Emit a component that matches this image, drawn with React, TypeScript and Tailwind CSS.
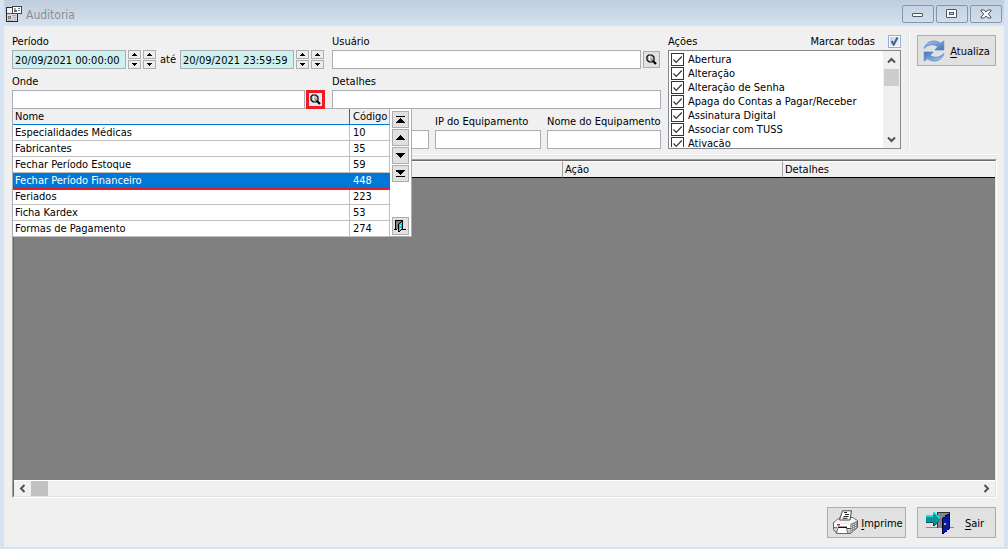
import React, { useState } from "react";

type Place = { name: string; code: string };

const PLACES: Place[] = [
  { name: "Especialidades Médicas", code: "10" },
  { name: "Fabricantes", code: "35" },
  { name: "Fechar Período Estoque", code: "59" },
  { name: "Fechar Período Financeiro", code: "448" },
  { name: "Feriados", code: "223" },
  { name: "Ficha Kardex", code: "53" },
  { name: "Formas de Pagamento", code: "274" },
];

const ACTIONS = [
  "Abertura",
  "Alteração",
  "Alteração de Senha",
  "Apaga do Contas a Pagar/Receber",
  "Assinatura Digital",
  "Associar com TUSS",
  "Ativação",
];

const FIELD =
  "h-[19px] min-w-0 border border-[#abadb3] bg-white px-[2px] outline-none";
const BUTTON = "border border-[#adadad] bg-[#e1e1e1]";

function Label({ htmlFor, children }: { htmlFor: string; children: React.ReactNode }) {
  return (
    <label htmlFor={htmlFor} className="block h-[21px] pt-1 leading-[17px] whitespace-nowrap">
      {children}
    </label>
  );
}

function Magnifier() {
  return (
    <svg viewBox="0 0 11 11" className="h-[11px] w-[11px]" fill="none">
      <path d="M2.500 1h3.500l2 2v3L6 8H3L1 6V2.500z" fill="#c4c4c4" stroke="#000" strokeWidth="1.200" />
      <path d="M3.500 2v4" stroke="#fff" strokeWidth="1.200" />
      <path d="M5.500 4.500v2" stroke="#8a8a8a" strokeWidth="1.200" />
      <path d="M7.200 7.200l2.800 2.800" stroke="#000" strokeWidth="2.200" />
    </svg>
  );
}

function Spinner({ label }: { label: string }) {
  return (
    <div className="flex flex-col gap-px">
      <button
        aria-label={`${label} mais`}
        className="flex h-[9px] w-[13px] items-center justify-center border border-[#adadad] bg-[#ececec]"
      >
        <svg viewBox="0 0 5 3" className="h-[3px] w-[5px]" shapeRendering="crispEdges">
          <path d="M2 0h1v1h1v1h1v1H0V2h1V1h1z" />
        </svg>
      </button>
      <button
        aria-label={`${label} menos`}
        className="flex h-[9px] w-[13px] items-center justify-center border border-[#adadad] bg-[#ececec]"
      >
        <svg viewBox="0 0 5 3" className="h-[3px] w-[5px]" shapeRendering="crispEdges">
          <path d="M0 0h5v1H4v1H3v1H2V2H1V1H0z" />
        </svg>
      </button>
    </div>
  );
}

function DateField({ id, value, label }: { id: string; value: string; label: string }) {
  return (
    <div className="flex gap-[2px]">
      <input
        id={id}
        aria-label={label}
        defaultValue={value}
        className="h-[19px] w-[114px] border border-[#abadb3] bg-[#cef0ee] px-[2px] pt-px outline-none"
      />
      <Spinner label={`${label}, data,`} />
      <Spinner label={`${label}, hora,`} />
    </div>
  );
}

function NavButton({ label, path }: { label: string; path: string }) {
  return (
    <button aria-label={label} className={`${BUTTON} flex h-[17px] w-[17px] items-center justify-center`}>
      <svg viewBox="0 0 9 7" className="h-[7px] w-[9px]" shapeRendering="crispEdges">
        <path d={path} />
      </svg>
    </button>
  );
}

function ExitGlyph() {
  return (
    <svg viewBox="0 0 13 12" className="h-[12px] w-[13px]" shapeRendering="crispEdges">
      <path d="M2 0h6v9H2z" fill="#808080" />
      <path d="M1 0h8v1H2v9H1zM0 9h3v1H0zM9 9h3v1H9zM8 1h1v9H8z" fill="#000" />
      <path d="M4 4l4-3v8l-4 3z" fill="#00d8d8" />
      <path d="M4 4l4-3v1L5 4.500V11l3-2v1l-3 2H4z" fill="#000" />
      <path d="M6 5h1v1H6zM6 8h1v1H6z" fill="#fff" />
    </svg>
  );
}

function PlacePicker() {
  const [selected, setSelected] = useState("448");
  return (
    <div className="absolute top-[18px] left-0 z-10 flex w-[400px] border-x border-t border-[#abadb3] bg-white">
      <table className="w-[377px] table-fixed border-separate border-spacing-0">
        <colgroup>
          <col />
          <col className="w-[40px]" />
        </colgroup>
        <thead>
          <tr>
            <th className="h-4 border-r border-b border-r-[#0078d7] border-b-[#0078d7] bg-[#f0f0f0] p-0 pt-px pl-[2px] text-left leading-[14px] font-normal">
              Nome
            </th>
            <th className="h-4 border-r border-b border-r-[#abadb3] border-b-[#0078d7] bg-[#f0f0f0] p-0 pt-px pl-[3px] text-left leading-[14px] font-normal">
              Código
            </th>
          </tr>
        </thead>
        <tbody>
          {PLACES.map((p) => {
            const cell =
              p.code === selected
                ? "relative z-10 h-4 border-b-2 border-b-[#ed1c24] bg-[#0078d7] p-0 pt-px text-left leading-[13px] text-white shadow-[0_1px_0_#ed1c24]"
                : "h-4 border-r border-b border-[#c0c0c0] p-0 pt-px text-left leading-[14px]";
            return (
              <tr key={p.code} onClick={() => setSelected(p.code)}>
                <td className={`${cell} pl-[2px]`}>{p.name}</td>
                <td className={`${cell} pl-[3px]`}>{p.code}</td>
              </tr>
            );
          })}
        </tbody>
      </table>
      <div className="flex flex-1 flex-col items-center gap-px border-b border-[#abadb3] pt-[2px] pb-px">
        <NavButton label="Primeiro" path="M0 0h9v1H0zM4 2h1v1h1v1h1v1h1v1h1v1H0V6h1V5h1V4h1V3h1z" />
        <NavButton label="Anterior" path="M4 1h1v1h1v1h1v1h1v1h1v1H0V5h1V4h1V3h1V2h1z" />
        <NavButton label="Próximo" path="M0 1h9v1H8v1H7v1H6v1H5v1H4V5H3V4H2V3H1V2H0z" />
        <NavButton label="Último" path="M0 0h9v1H8v1H7v1H6v1H5v1H4V4H3V3H2V2H0zM0 6h9v1H0z" />
        <button aria-label="Fechar lista" className={`${BUTTON} mt-auto flex h-[18px] w-[17px] items-center justify-center`}>
          <ExitGlyph />
        </button>
      </div>
    </div>
  );
}

function Chevron({ d }: { d: string }) {
  return (
    <svg viewBox="0 0 9 9" className="h-[9px] w-[9px]" fill="none" stroke="#505050" strokeWidth="2">
      <path d={d} />
    </svg>
  );
}

function ActionList() {
  return (
    <div className="flex h-[99px] overflow-hidden border border-[#828790] bg-white">
      <div className="h-[96px] flex-1 overflow-hidden pt-[2px] pl-[2px]">
        {ACTIONS.map((a) => (
          <label key={a} className="flex h-[14px] items-start gap-1 leading-[14px] whitespace-nowrap">
            <span className="relative flex h-[13px] w-[13px] shrink-0">
              <input
                type="checkbox"
                defaultChecked
                className="peer h-[13px] w-[13px] appearance-none border border-[#333] bg-white"
              />
              <svg
                viewBox="0 0 13 13"
                className="pointer-events-none absolute inset-0 hidden h-[13px] w-[13px] peer-checked:block"
                fill="none"
                stroke="#333"
                strokeWidth="1.200"
              >
                <path d="M2.500 6.500l2.700 2.800L10.800 3.500" />
              </svg>
            </span>
            {a}
          </label>
        ))}
      </div>
      <div className="flex w-[17px] flex-col items-center bg-[#f0f0f0]">
        <button aria-label="Rolar para cima" className="flex h-[18px] w-full items-center justify-center">
          <Chevron d="M1 6.500L4.500 3 8 6.500" />
        </button>
        <div className="h-[17px] w-[15px] bg-[#cdcdcd]" />
        <button aria-label="Rolar para baixo" className="mt-auto flex h-[18px] w-full items-center justify-center">
          <Chevron d="M1 2.500L4.500 6 8 2.500" />
        </button>
      </div>
    </div>
  );
}

function WindowIcon() {
  return (
    <svg viewBox="0 0 16 16" className="h-4 w-4" shapeRendering="crispEdges">
      <path d="M0 1h7v7h5v8H0z" fill="#2a2a2a" />
      <path d="M1 2h5v6h5v7H1z" fill="#d9d9d9" />
      <path d="M1 2h5v5H1z" fill="#f4f4f4" />
      <path d="M1 7h10v1H1z" fill="#555" />
      <path d="M2 10h3v1H2zM2 12h3v1H2zM2 10h1v3H2zM4 10h1v3H4z" fill="#777" />
      <path d="M6 9h4v1H6zM7 11h3v1H7zM2 14h2v1H2zM5 14h2v1H5zM8 13h2v1H8z" fill="#aaa" />
      <path d="M6 0h10v8H6z" fill="#444" />
      <path d="M7 1h8v6H7z" fill="#fff" />
      <path d="M8 2h2v2H8z" fill="#e0a050" />
      <path d="M8 4h3v2H8z" fill="#3d6fb5" />
      <path d="M12 2h2v1h-2zM12 4h2v1h-2z" fill="#6a7a90" />
    </svg>
  );
}

function RefreshIcon() {
  return (
    <svg viewBox="0 0 22 22" className="h-[22px] w-[22px]">
      <defs>
        <linearGradient id="blueUp" x1="0" y1="0" x2="1" y2="1">
          <stop offset="0" stopColor="#a9caee" />
          <stop offset="1" stopColor="#3f74b8" />
        </linearGradient>
        <linearGradient id="blueDown" x1="0" y1="0" x2="1" y2="1">
          <stop offset="0" stopColor="#3f74b8" />
          <stop offset="1" stopColor="#a9caee" />
        </linearGradient>
      </defs>
      <path
        d="M1 8.500C2.500 3.500 6.500 1 11 1c2.500 0 4.700.8 6.300 2.400L20.800 1v9h-9l3-3.200C11.500 3.800 5.500 4 1 8.500z"
        fill="url(#blueUp)"
        stroke="#5584bd"
        strokeWidth=".7"
      />
      <path
        d="M21 13.500C19.500 18.500 15.500 21 11 21c-2.500 0-4.700-.8-6.300-2.400L1.200 21v-9h9l-3 3.200c3.300 3 9.300 2.800 13.800-1.700z"
        fill="url(#blueDown)"
        stroke="#5584bd"
        strokeWidth=".7"
      />
    </svg>
  );
}

function PrinterIcon() {
  return (
    <svg viewBox="0 0 26 25" className="h-[25px] w-[26px]">
      <path d="M.5 12.500L7 7.500h12.500l5 3v7l-7 6H4l-3.500-4z" fill="#c4c4c4" stroke="#444" strokeWidth=".8" />
      <path d="M1 12.500L7 8h12.500l4.500 2.800-6.500 3.200z" fill="#f4f4f4" />
      <path d="M1 12.800L17 14v5.500H1z" fill="#fff" />
      <path d="M17.500 14l6.500-3v6.500l-6.500 5.500z" fill="#8c8c8c" />
      <path d="M18.500 15v7M20.500 14v6.500M22.500 13v6" stroke="#d8d8d8" strokeWidth="1" strokeDasharray="1 1" />
      <path d="M1 17.800h3M14 18.500h3.500" stroke="#333" strokeWidth="1" />
      <path d="M9.500.8h9L17 10H6.500z" fill="#fff" stroke="#333" strokeWidth=".9" />
      <path d="M11 2.500h3M12 4.500h4M10.500 6.500h5M9.500 8.300h5" stroke="#222" strokeWidth="1" />
      <path d="M5 17.500h8l2 6H3.500z" fill="#fff" stroke="#555" strokeWidth=".8" />
      <path d="M5 17.300h9" stroke="#111" strokeWidth="1.400" />
      <path d="M4 14h3v1.500H4z" fill="#f01818" />
    </svg>
  );
}

function DoorIcon() {
  return (
    <svg viewBox="0 0 28 22" className="h-[22px] w-[28px]" shapeRendering="crispEdges">
      <path d="M0 15h28v1H0z" fill="#8a8a8a" />
      <path d="M11 0h13v16H11z" fill="#333" />
      <path d="M12 1h11v15H12z" fill="#858585" />
      <path d="M0 4h7V1h1l7 6.500L8 14H7v-3H0z" fill="#0c8f96" />
      <path d="M0 3h7V0h1l6 6v1L8 2H7v3H0z" fill="#00e8f4" />
      <path d="M0 10h7v1H0zM7 11h1v3H7zM8 13h1v1H8zM9 12h1v1H9zM10 11h1v1h-1zM11 10h1v1h-1zM12 9h1v1h-1z" fill="#064a50" />
      <path d="M17 6l6-4v15l-6 5z" fill="#0a18a8" />
      <path d="M16 6h1v16h-1zM17 5h2v1h-2zM19 3h2v1h-2zM21 2h2v1h-2zM17 21h1v1h-1zM19 19h2v1h-2zM22 17h1v1h-1z" fill="#000028" />
      <path d="M18 11h2v2h-2z" fill="#c8b830" />
      <path d="M23 1h1v16h-1z" fill="#111" />
    </svg>
  );
}

function ActionButton({
  icon,
  hotkey,
  rest,
  gap,
}: {
  icon: React.ReactNode;
  hotkey: string;
  rest: string;
  gap: string;
}) {
  return (
    <button className={`${BUTTON} flex h-[31px] w-[79px] items-center ${gap}`}>
      {icon}
      <span className="flex-1 pt-[2px] text-center">
        <span className="underline underline-offset-2">{hotkey}</span>
        {rest}
      </span>
    </button>
  );
}

function CaptionButton({ label, children }: { label: string; children: React.ReactNode }) {
  return (
    <button
      aria-label={label}
      className="flex h-[18px] w-[32px] items-center justify-center rounded-[2px] border border-[#8795ac] bg-linear-to-b from-[#c5d3e4] to-[#d0deed]"
    >
      <svg viewBox="0 0 12 10" className="h-[10px] w-[12px]" fill="#fafafa" stroke="#50545f" strokeWidth="1">
        {children}
      </svg>
    </button>
  );
}

function TitleBar() {
  return (
    <header className="flex h-[26px] items-center bg-linear-to-b from-[#bfcddc] to-[#d5e2f0] px-[2px] pt-px">
      <WindowIcon />
      <h1 className="ml-1 flex-1 pt-[2px] text-[12px] leading-4 text-[#8c8f94]">Auditoria</h1>
      <div className="flex gap-[2px]">
        <CaptionButton label="Minimizar">
          <rect x="0.500" y="4.500" width="10" height="3" rx="0.500" />
        </CaptionButton>
        <CaptionButton label="Maximizar">
          <rect x="0.500" y="0.500" width="10" height="8" rx="0.500" />
          <rect x="3.500" y="3.500" width="4" height="2" fill="#c9d7e7" />
        </CaptionButton>
        <CaptionButton label="Fechar">
          <path d="M1 1h3.200L6 3l1.800-2H11v1L8.300 5 11 8v1H7.800L6 7 4.200 9H1V8l2.700-3L1 2z" />
        </CaptionButton>
      </div>
    </header>
  );
}

function Filters() {
  return (
    <div className="grid flex-1 grid-cols-[313px_1fr] gap-x-[7px] gap-y-0">
      <div>
        <Label htmlFor="start">Período</Label>
        <div className="flex items-center pr-px">
          <DateField id="start" label="Início" value="20/09/2021 00:00:00" />
          <span className="flex-1 text-center">até</span>
          <DateField id="end" label="Fim" value="20/09/2021 23:59:59" />
        </div>
      </div>
      <div>
        <Label htmlFor="user">Usuário</Label>
        <div className="flex items-center gap-[2px] pr-px">
          <input id="user" className={`${FIELD} flex-1`} />
          <button aria-label="Buscar usuário" className={`${BUTTON} flex h-[17px] w-[17px] items-center justify-center`}>
            <Magnifier />
          </button>
        </div>
      </div>
      <div>
        <Label htmlFor="place">Onde</Label>
        <div className="relative flex gap-px">
          <input id="place" className={`${FIELD} flex-1`} />
          <button
            aria-label="Buscar onde"
            className="relative z-20 flex h-[19px] w-[19px] items-center justify-center border-[3px] border-[#ed1c24] bg-[#e8e8e8]"
          >
            <Magnifier />
          </button>
          <PlacePicker />
        </div>
      </div>
      <div>
        <Label htmlFor="details">Detalhes</Label>
        <input id="details" className={`${FIELD} block w-full`} />
      </div>
      <div className="col-start-2 grid grid-cols-[97px_106px_1fr] gap-[6px]">
        <input aria-label="Código" className={`${FIELD} mt-[21px]`} />
        <div>
          <Label htmlFor="ip">IP do Equipamento</Label>
          <input id="ip" className={`${FIELD} block w-full`} />
        </div>
        <div>
          <Label htmlFor="machine">Nome do Equipamento</Label>
          <input id="machine" className={`${FIELD} block w-full`} />
        </div>
      </div>
    </div>
  );
}

export default function App() {
  return (
    <div className="flex min-h-screen flex-col bg-[#d6e3f2] px-1 pb-[2px] font-['DejaVu_Sans_Condensed','Noto_Sans',sans-serif] text-[11px] leading-[14px] text-black">
      <TitleBar />
      <main className="flex flex-1 flex-col bg-[#f0f0f0] pr-[7px] pl-2">
        <section className="flex pt-[3px]">
          <Filters />
          <div className="ml-[7px] w-[233px]">
            <div className="flex h-[21px] justify-between pt-1 leading-[17px]">
              <span>Ações</span>
              <label className="flex items-center gap-[13px]">
                Marcar todas
                <span className="relative flex h-[13px] w-[13px]">
                  <input
                    type="checkbox"
                    defaultChecked
                    className="peer h-[13px] w-[13px] appearance-none border border-[#8fb0dc] bg-linear-to-br from-[#c3ccd8] to-[#f4f6f9] outline-1 -outline-offset-2 outline-white"
                  />
                  <svg
                    viewBox="0 0 13 13"
                    className="pointer-events-none absolute inset-0 hidden h-[13px] w-[13px] peer-checked:block"
                    fill="none"
                    stroke="#3d5f9c"
                    strokeWidth="2"
                  >
                    <path d="M3.500 6l2.200 3.500L9.500 2.500" />
                  </svg>
                </span>
              </label>
            </div>
            <ActionList />
          </div>
          <div className="mt-[5px] ml-[7px] w-[2px] border-l border-l-[#e3e3e3] bg-white" />
          <div className="mt-[6px] mr-px ml-[7px]">
            <ActionButton icon={<RefreshIcon />} hotkey="A" rest="tualiza" gap="pl-[5px]" />
          </div>
        </section>

        <div className="mt-[5px] h-[2px] border-b border-[#e3e3e3] bg-white" />

        <section className="mt-[3px] flex flex-1 flex-col border-t border-r border-b border-l border-t-[#a0a0a0] border-r-white border-b-white border-l-[#a0a0a0]">
          <div className="flex flex-1 flex-col border border-t-[#696969] border-r-[#e3e3e3] border-b-[#e3e3e3] border-l-[#696969]">
            <div className="flex-1 bg-[#808080]">
              <table className="w-full table-fixed border-separate border-spacing-0">
                <colgroup>
                  <col className="w-[549px]" />
                  <col className="w-[220px]" />
                  <col />
                </colgroup>
                <thead>
                  <tr className="text-left">
                    <td className="h-[17px] border-t border-r border-b border-t-white border-r-[#a0a0a0] border-b-black bg-[#f0f0f0] p-0" />
                    <th className="h-[17px] border-t border-r border-b border-t-white border-r-[#a0a0a0] border-b-black bg-[#f0f0f0] p-0 pl-[2px] font-normal">
                      Ação
                    </th>
                    <th className="h-[17px] border-t border-b border-t-white border-b-black bg-[#f0f0f0] p-0 pl-[2px] font-normal">
                      Detalhes
                    </th>
                  </tr>
                </thead>
              </table>
            </div>
            <div className="flex h-4 items-center border-t border-white bg-[#f0f0f0]">
              <button aria-label="Rolar para a esquerda" className="flex h-full w-[17px] items-center justify-center">
                <Chevron d="M6.500 1L3 4.500 6.500 8" />
              </button>
              <div className="h-[15px] w-[17px] bg-[#c1c1c1]" />
              <button aria-label="Rolar para a direita" className="ml-auto flex h-full w-[17px] items-center justify-center">
                <Chevron d="M2.500 1L6 4.500 2.500 8" />
              </button>
            </div>
          </div>
        </section>

        <footer className="flex justify-end gap-[11px] pt-[9px] pr-px pb-[9px]">
          <ActionButton icon={<PrinterIcon />} hotkey="I" rest="mprime" gap="pl-[5px]" />
          <ActionButton icon={<DoorIcon />} hotkey="S" rest="air" gap="pl-2" />
        </footer>
      </main>
    </div>
  );
}
